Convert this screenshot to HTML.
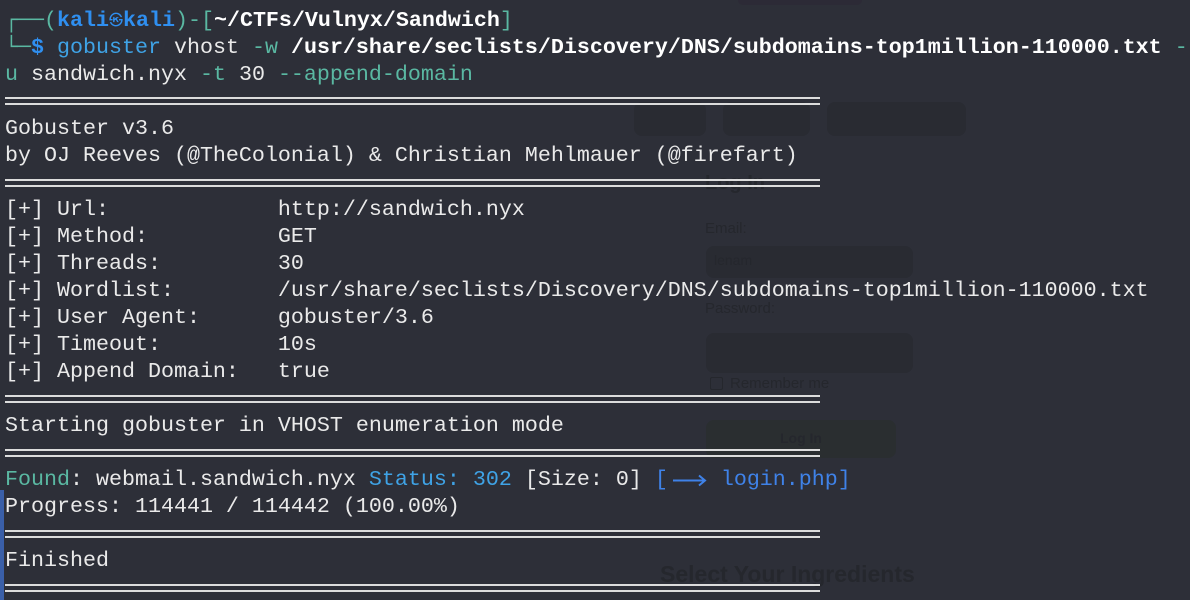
<!DOCTYPE html>
<html><head><meta charset="utf-8"><style>
html,body{margin:0;padding:0;}
body{width:1190px;height:600px;background:#2d2f38;position:relative;overflow:hidden;font-family:"Liberation Mono","DejaVu Sans Mono",monospace;}
.bg{position:absolute;color:#25272d;font-family:"Liberation Sans",sans-serif;}
.box{position:absolute;background:#292b32;border-radius:8px;}
.r{position:absolute;left:5px;height:27px;line-height:27px;font-size:21.67px;color:#eaeaea;white-space:pre;}
.sep{position:absolute;left:5px;width:815px;height:2px;background:#dcdcdc;}
.t{color:#5ab8a2}.k{color:#2f8ff0;font-weight:bold}.w{color:#fff;font-weight:bold}.c{color:#3fa3e6}.b{color:#3f82e8}
.sym{display:inline-block;width:14px;text-align:center;font-family:"Noto Sans CJK JP",sans-serif;font-size:14px;font-weight:bold;overflow:hidden;vertical-align:top}
</style></head><body>
<div class="box" style="left:738px;top:-5px;width:124px;height:10px;background:#2c2a36"></div>
<div class="box" style="left:634px;top:102px;width:72px;height:34px"></div>
<div class="box" style="left:723px;top:102px;width:87px;height:34px"></div>
<div class="box" style="left:827px;top:102px;width:139px;height:34px"></div>
<div class="bg" style="left:705px;top:172px;font-size:20px;font-weight:bold">Log In</div>
<div class="bg" style="left:705px;top:220px;font-size:15px">Email:</div>
<div class="box" style="left:706px;top:246px;width:207px;height:32px"></div>
<div class="bg" style="left:714px;top:252px;font-size:14px">lenam</div>
<div class="bg" style="left:705px;top:300px;font-size:15px">Password:</div>
<div class="box" style="left:706px;top:333px;width:207px;height:40px"></div>
<div class="bg" style="left:730px;top:375px;font-size:15px">Remember me</div>
<div class="box" style="left:710px;top:377px;width:11px;height:11px;border-radius:2px;background:none;border:1px solid #25272d"></div>
<div class="box" style="left:706px;top:420px;width:190px;height:38px;background:#2a2e30"></div>
<div class="bg" style="left:780px;top:430px;font-size:14px;font-weight:bold">Log In</div>
<div class="bg" style="left:660px;top:561px;font-size:23px;font-weight:bold">Select Your Ingredients</div>
<div style="position:absolute;left:0;top:490px;width:4px;height:110px;background:#3a5fa8"></div>

<div class="r" style="top:7px"><span class="t">┌──(</span><span class="k">kali<span class="sym">㉿</span>kali</span><span class="t">)-[</span><span class="w">~/CTFs/Vulnyx/Sandwich</span><span class="t">]</span></div>
<div class="r" style="top:34px"><span class="t">└─</span><span class="k">$</span> <span class="c">gobuster</span> vhost <span class="t">-w</span> <span class="w">/usr/share/seclists/Discovery/DNS/subdomains-top1million-110000.txt</span> <span class="t">-</span></div>
<div class="r" style="top:61px"><span class="t">u</span> sandwich.nyx <span class="t">-t</span> 30 <span class="t">--append-domain</span></div>
<div class="sep" style="top:97px"></div><div class="sep" style="top:103px"></div>
<div class="r" style="top:115px">Gobuster v3.6</div>
<div class="r" style="top:142px">by OJ Reeves (@TheColonial) &amp; Christian Mehlmauer (@firefart)</div>
<div class="sep" style="top:179px"></div><div class="sep" style="top:185px"></div>
<div class="r" style="top:196px">[+] Url:             http://sandwich.nyx</div>
<div class="r" style="top:223px">[+] Method:          GET</div>
<div class="r" style="top:250px">[+] Threads:         30</div>
<div class="r" style="top:277px">[+] Wordlist:        /usr/share/seclists/Discovery/DNS/subdomains-top1million-110000.txt</div>
<div class="r" style="top:304px">[+] User Agent:      gobuster/3.6</div>
<div class="r" style="top:331px">[+] Timeout:         10s</div>
<div class="r" style="top:358px">[+] Append Domain:   true</div>
<div class="sep" style="top:395px"></div><div class="sep" style="top:401px"></div>
<div class="r" style="top:412px">Starting gobuster in VHOST enumeration mode</div>
<div class="sep" style="top:449px"></div><div class="sep" style="top:455px"></div>
<div class="r" style="top:466px"><span class="t">Found</span>: webmail.sandwich.nyx <span class="c">Status: 302</span> [Size: 0] <span class="b">[<svg width="40" height="27" style="vertical-align:top"><path d="M5 14.5H37M31 9.5L37 14.5L31 19.5" stroke="#3f82e8" stroke-width="2" fill="none"/></svg> login.php]</span></div>
<div class="r" style="top:493px">Progress: 114441 / 114442 (100.00%)</div>
<div class="sep" style="top:530px"></div><div class="sep" style="top:536px"></div>
<div class="r" style="top:547px">Finished</div>
<div class="sep" style="top:584px"></div><div class="sep" style="top:590px"></div>
</body></html>
